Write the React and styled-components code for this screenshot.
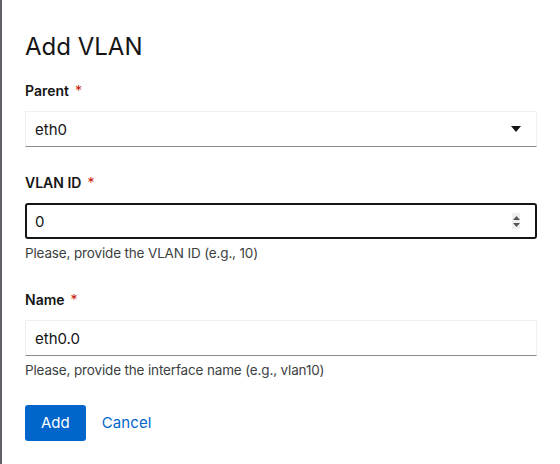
import React from 'react';
import styled, { createGlobalStyle } from 'styled-components';

const GlobalStyle = createGlobalStyle`
  html, body {
    margin: 0;
    padding: 0;
    background: #ffffff;
  }
  body {
    font-family: Inter, "Noto Sans", sans-serif;
    color: #151515;
  }
`;

const Dialog = styled.div`
  width: 560px;
  height: 464px;
  box-sizing: border-box;
  border-left: 2px solid #5f6266;
  padding: 31px 23px 0 23px;
  background: #fff;
`;

const Title = styled.h1`
  margin: 0 0 18px 0;
  font-size: 24px;
  line-height: 31px;
  font-weight: 400;
  color: #151515;
`;

const Form = styled.form`
  display: flex;
  flex-direction: column;
  gap: 25px;
`;

const Group = styled.div`
  display: flex;
  flex-direction: column;
`;

const Label = styled.label`
  font-size: 14px;
  line-height: 21px;
  font-weight: 600;
  margin-bottom: 10px;
  color: #151515;
`;

const Required = styled.span`
  color: #c9190b;
  margin-left: 6px;
  font-weight: 400;
`;

const Field = styled.div`
  height: 36px;
  box-sizing: border-box;
  display: flex;
  align-items: center;
  padding: 0 8px 0 9px;
  font-size: 15px;
  color: #151515;
  border: ${p => (p.$focused ? '2px solid #151515' : '1px solid #f0f0f0')};
  border-bottom-color: ${p => (p.$focused ? '#151515' : '#8a8d90')};
  border-radius: ${p => (p.$focused ? '3px' : '0')};
  padding-left: ${p => (p.$focused ? '8px' : '9px')};
`;

const Value = styled.span`
  flex: 1;
`;

const Caret = styled.svg`
  width: 10px;
  height: 6px;
  margin-right: 7px;
`;

const Spinner = styled.div`
  width: 8px;
  height: 16px;
  background: #efefef;
  display: flex;
  flex-direction: column;
  align-items: center;
  justify-content: center;
  gap: 3px;
  margin-right: 7px;
`;

const Helper = styled.div`
  margin-top: 4px;
  font-size: 13.5px;
  letter-spacing: -0.15px;
  line-height: 21px;
  color: #3c3f42;
`;

const Actions = styled.div`
  display: flex;
  align-items: center;
  margin-top: 24px;
`;

const PrimaryButton = styled.button`
  height: 36px;
  padding: 0 16px 2px;
  border: none;
  border-radius: 3px;
  background: #0066cc;
  color: #fff;
  font-family: inherit;
  font-size: 15px;
`;

const LinkButton = styled.button`
  height: 36px;
  padding: 0 16px 2px;
  border: none;
  background: none;
  color: #0066cc;
  font-family: inherit;
  font-size: 15px;
  letter-spacing: 0.1px;
`;

const Arrow = ({ up }) => (
  <svg width="7" height="4" viewBox="0 0 7 4">
    <path d={up ? 'M0 4 L3.5 0 L7 4 Z' : 'M0 0 L7 0 L3.5 4 Z'} fill="#555" />
  </svg>
);

export default function App() {
  return (
    <>
      <GlobalStyle />
      <Dialog>
        <Title>Add VLAN</Title>
        <Form onSubmit={e => e.preventDefault()}>
          <Group>
            <Label>Parent<Required>*</Required></Label>
            <Field>
              <Value>eth0</Value>
              <Caret viewBox="0 0 10 6">
                <path d="M0 0 L10 0 L5 6 Z" fill="#151515" />
              </Caret>
            </Field>
          </Group>
          <Group>
            <Label>VLAN ID<Required>*</Required></Label>
            <Field $focused>
              <Value>0</Value>
              <Spinner>
                <Arrow up />
                <Arrow />
              </Spinner>
            </Field>
            <Helper>Please, provide the VLAN ID (e.g., 10)</Helper>
          </Group>
          <Group>
            <Label>Name<Required>*</Required></Label>
            <Field>
              <Value>eth0.0</Value>
            </Field>
            <Helper>Please, provide the interface name (e.g., vlan10)</Helper>
          </Group>
        </Form>
        <Actions>
          <PrimaryButton>Add</PrimaryButton>
          <LinkButton>Cancel</LinkButton>
        </Actions>
      </Dialog>
    </>
  );
}
